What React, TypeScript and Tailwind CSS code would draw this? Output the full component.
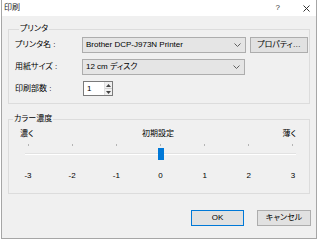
import clsx from "clsx";

const Chevron = () => (
  <svg width="7" height="4" viewBox="0 0 7 4" className="shrink-0">
    <polyline points="0.5,0.5 3.5,3.5 6.5,0.5" fill="none" stroke="#606060" strokeWidth="1" />
  </svg>
);

const Combo = ({ text, className }: { text: string; className?: string }) => (
  <div
    className={clsx(
      "flex items-center h-[16px] border border-[#adadad] bg-[#e5e5e5] pl-[3px] pr-[4px]",
      className
    )}
  >
    <span className="flex-1 leading-[10px] whitespace-nowrap">{text}</span>
    <Chevron />
  </div>
);

const ticks = [-3, -2, -1, 0, 1, 2, 3];

export default function App() {
  return (
    <div className="w-[320px] h-[240px] bg-white overflow-hidden text-[8px] text-black font-['Liberation_Sans','Noto_Sans_CJK_JP',sans-serif] [font-feature-settings:'palt']">
      <div className="ml-[1px] w-[316px] h-[239px] flex flex-col border-l border-r border-b border-[#a6a6a6]">
        {/* title bar */}
        <div className="h-[16px] bg-white flex items-center pl-[2px] pr-[6px] shrink-0">
          <span className="leading-[10px] text-[#222]">印刷</span>
          <span className="ml-auto mr-[23px] leading-[10px] text-[#333]">?</span>
          <svg width="7" height="7" viewBox="0 0 7 7">
            <path d="M0.5 0.5 L6.5 6.5 M6.5 0.5 L0.5 6.5" stroke="#333" strokeWidth="1" />
          </svg>
        </div>

        <div className="flex-1 bg-[#f0f0f0] pl-[6px] flex flex-col">
          {/* printer group */}
          <fieldset className="mt-[8px] w-[302px] border border-[#dcdcdc] pl-[6px] pt-[3px] pb-[7px]">
            <legend className="ml-[4px] px-[1px] leading-[10px]">プリンタ</legend>
            <div className="flex items-center">
              <span className="w-[67px] leading-[10px]">プリンタ名 :</span>
              <Combo text="Brother DCP-J973N Printer" className="w-[164px]" />
              <button className="ml-[4px] w-[58px] h-[16px] border border-[#adadad] bg-[#e1e1e1] leading-[10px]">
                プロパティ…
              </button>
            </div>
            <div className="flex items-center mt-[6px]">
              <span className="w-[67px] leading-[10px]">用紙サイズ :</span>
              <Combo text="12 cm ディスク" className="w-[163px]" />
            </div>
            <div className="flex items-center mt-[6px]">
              <span className="w-[68px] leading-[10px]">印刷部数 :</span>
              <div className="flex h-[15px] border border-[#7a7a7a] bg-white">
                <span className="w-[20px] pl-[3px] leading-[13px]">1</span>
                <div className="w-[8px] flex flex-col border-l border-[#e0e0e0]">
                  <div className="flex-1 flex items-center justify-center bg-[#f0f0f0] border-b border-[#d0d0d0]">
                    <svg width="5" height="3" viewBox="0 0 5 3">
                      <polygon points="0,3 2.5,0 5,3" fill="#444" />
                    </svg>
                  </div>
                  <div className="flex-1 flex items-center justify-center bg-[#f0f0f0]">
                    <svg width="5" height="3" viewBox="0 0 5 3">
                      <polygon points="0,0 2.5,3 5,0" fill="#444" />
                    </svg>
                  </div>
                </div>
              </div>
            </div>
          </fieldset>

          {/* density group */}
          <fieldset className="mt-[10px] w-[302px] border border-[#dcdcdc] pt-[5px] pb-[12px]">
            <legend className="ml-[4px] px-[1px] leading-[10px]">カラー濃度</legend>
            <div className="flex justify-between pl-[11px] pr-[13px] leading-[10px]">
              <span>濃く</span>
              <span>初期設定</span>
              <span>薄く</span>
            </div>
            <div className="ml-[13px] w-[277px]">
              <div className="mt-[5px] h-[3px] flex justify-between">
                {ticks.map((t) => (
                  <div key={t} className="w-[12px] flex justify-center">
                    <div className="w-[1px] h-[2px] bg-[#b4b4b4]" />
                  </div>
                ))}
              </div>
              <div className="mt-[1px] mx-[3px] h-[12px] flex items-center">
                <div className="flex-1 h-[2px] bg-[#e2e2e2] border-b border-white" />
                <div className="w-[6px] h-[12px] bg-[#0078d7]" />
                <div className="flex-1 h-[2px] bg-[#e2e2e2] border-b border-white" />
              </div>
              <div className="mt-[11px] flex justify-between leading-[10px]">
                {ticks.map((t) => (
                  <span key={t} className="w-[12px] text-center">
                    {t}
                  </span>
                ))}
              </div>
            </div>
          </fieldset>

          {/* buttons */}
          <div className="mt-[16px] flex justify-end gap-[13px] pr-[5px]">
            <button className="w-[53px] h-[16px] border border-[#0078d7] bg-[#e1e1e1] leading-[10px]">OK</button>
            <button className="w-[54px] h-[16px] border border-[#adadad] bg-[#e1e1e1] leading-[10px]">キャンセル</button>
          </div>
        </div>
      </div>
    </div>
  );
}
